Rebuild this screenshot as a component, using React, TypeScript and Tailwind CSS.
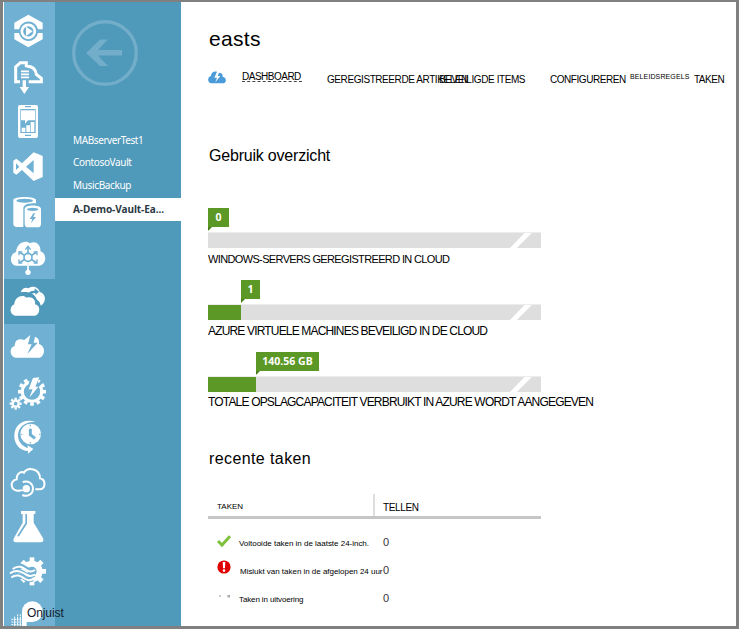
import type { ReactNode } from "react";

const BLUE = "#70b1d3";
const W = "#ffffff";

type RailItem = { top: number; art: ReactNode; active?: boolean };

const gearTeeth = (cx: number, cy: number, r: number, n: number, w: number, h: number) =>
  Array.from({ length: n }, (_, i) => (
    <rect key={i} x={cx - w / 2} y={cy - r} width={w} height={h} fill={W} transform={`rotate(${(i * 360) / n} ${cx} ${cy})`} />
  ));

const railItems: RailItem[] = [
  {
    top: 27,
    art: (
      <>
        <path d="M43 88V68L85 44L128 68V88H114A29 29 0 0 0 57 88Z M43 99H57A29 29 0 0 0 114 99H128V118L85 142L43 118Z" fill={W} />
        <circle cx="85" cy="94" r="19.5" fill="none" stroke={W} strokeWidth="8" />
        <path d="M78 80L98 94L78 108Z" fill={W} />
      </>
    ),
  },
  {
    top: 162,
    art: (
      <>
        <path d="M60 245H47V201L61 188H79V202M86 245H124V235L109 223Q105 199 81 199" fill="none" stroke={W} strokeWidth="9" />
        <path d="M63 214H87M63 223H87M63 232H87" stroke={W} strokeWidth="5" />
        <path d="M68 241H78V261H87L73 282L59 261H68Z" fill={W} />
      </>
    ),
  },
  {
    top: 297,
    art: (
      <>
        <rect x="54" y="315" width="60" height="99" rx="6" fill={W} />
        <path d="M61 327H107V399H61Z" fill={BLUE} />
        <path d="M63 331H105V361H84L75 371V361H63ZM65 383H76V396H65ZM79 376H90V396H79ZM92 366H103V396H92Z" fill={W} />
        <path d="M75 320H93M75 406H93" stroke={BLUE} strokeWidth="4" />
      </>
    ),
  },
  {
    top: 12,
    art: (
      <path d="M101 37L128 48V111L101 123L66 90L49 104L40 98V62L49 56L66 70ZM101 60L78 80L101 100ZM48 70V90L58 80Z" fill={W} fillRule="evenodd" />
    ),
  },
  {
    top: 147,
    art: (
      <>
        <path d="M40 180C40 168 108 168 108 180V190C84 190 70 194 70 205V261H54Q40 261 40 251Z" fill={W} />
        <ellipse cx="74" cy="182" rx="25" ry="6" fill={BLUE} />
        <path d="M74 207C74 193 123 193 123 207V251Q123 262 112 262H85Q74 262 74 251Z" fill={W} />
        <ellipse cx="98" cy="208" rx="17" ry="5" fill={BLUE} />
        <path d="M101 219L89 237H97L93 250L108 231H100L105 219Z" fill={BLUE} />
      </>
    ),
  },
  {
    top: 282,
    art: (
      <>
        <path d="M50 377C28 376 27 342 48 336C50 310 75 298 90 310C107 300 124 316 121 334C143 340 139 377 116 377Z" fill={W} />
        <path d="M84 321V387M84 352L58 337M84 352L110 337M84 352L58 368M84 352L110 368" stroke={BLUE} strokeWidth="5" />
        <path d="M76 329L84 319L92 329M57 346V336H67M101 336H111V346M57 358V369H67M101 369H111V358" fill="none" stroke={BLUE} strokeWidth="4" />
        <circle cx="84" cy="352" r="12" fill={W} stroke={BLUE} strokeWidth="5" />
        <path d="M84 366V394" stroke={W} strokeWidth="5" />
        <circle cx="84" cy="397" r="8" fill={W} />
      </>
    ),
  },
  {
    top: 12,
    active: true,
    art: (
      <>
        <path d="M62 52C66 39 78 36 86 40C100 30 116 38 119 51C138 55 141 82 122 92C120 79 113 77 110 73C104 54 84 48 62 52Z" fill={W} />
        <path d="M84 56Q90 46 104 47V40L117 50L106 60V54Q96 53 91 60Z" fill="#4f99ba" />
        <path d="M46 122C28 120 27 94 43 88C43 66 68 56 80 68C95 62 109 75 105 88C124 91 120 120 105 122Z" fill={W} />
      </>
    ),
  },
  {
    top: 147,
    art: (
      <path d="M47 248C27 245 28 216 44 213C45 193 57 189 73 195L91 180L84 208H95L82 237L113 203H101L105 185C114 188 119 196 117 207C139 213 135 246 118 248Z" fill={W} />
    ),
  },
  {
    top: -63,
    art: (
      <>
        <circle cx="96" cy="5" r="29" fill="none" stroke={W} strokeWidth="9" />
        {gearTeeth(96, 5, 42, 12, 11, 10)}
        <path d="M93 -50H122L113 -22H128L84 26L94 -4H83Z" fill={BLUE} />
        <path d="M99 -36L118 -38L106 -10H115L88 23L98 -2H86Z" fill={W} />
        <circle cx="47" cy="41" r="9" fill="none" stroke={W} strokeWidth="7" />
        {gearTeeth(47, 41, 18, 8, 7, 7)}
      </>
    ),
  },
  {
    top: 72,
    art: (
      <>
        <path d="M107 95C65 84 43 108 43 138C43 165 61 182 84 183V191L100 177L83 166V174C66 168 53 153 54 134C55 112 75 94 107 95Z" fill={W} />
        <circle cx="92" cy="132" r="31" fill={W} />
        <path d="M91 116V134L105 145" fill="none" stroke={BLUE} strokeWidth="9" />
        <path d="M91 104V109M117 133H122M91 156V161M62 133H67" stroke={BLUE} strokeWidth="3" />
      </>
    ),
  },
  {
    top: 207,
    art: (
      <>
        <path d="M61 302C30 306 27 272 50 268C50 246 67 244 72 248C84 230 119 235 120 265C139 269 137 298 119 298H106" fill="none" stroke={W} strokeWidth="6" />
        <path d="M68 276C85 270 99 281 99 296C99 312 83 322 67 315" fill="none" stroke={W} strokeWidth="6" />
        <circle cx="79" cy="296" r="11" fill={W} />
        <path d="M59 301H80" stroke={W} strokeWidth="5" />
      </>
    ),
  },
  {
    top: -3,
    art: (
      <>
        <path d="M63 18H106V27H101V53L129 99Q134 112 121 112H49Q36 112 42 99L68 53V27H63Z" fill={W} />
        <path d="M76 27H81V56L57 94H51L76 54Z" fill={BLUE} />
      </>
    ),
  },
  {
    top: 132,
    art: (
      <>
        <circle cx="96" cy="199" r="23" fill="none" stroke={W} strokeWidth="18" />
        {gearTeeth(96, 199, 42, 8, 14, 14)}
        <path d="M30 190C55 170 70 185 83 193Q92 198 103 194M30 205C52 187 68 202 80 210Q91 216 103 210M35 219C54 204 65 214 77 222Q87 228 99 223" fill="none" stroke={BLUE} strokeWidth="12" />
        <path d="M38 192C56 178 69 188 81 196Q92 203 105 195M30 205C52 191 68 202 80 210Q91 216 105 209M34 217C52 205 63 214 76 222Q87 229 100 222" fill="none" stroke={W} strokeWidth="6" />
      </>
    ),
  },
  {
    top: 267,
    art: (
      <>
        <circle cx="97" cy="320" r="31" fill={W} />
        <path d="M66 320H97V351H80V363H66Z" fill={W} />
        <path d="M34 343H64M34 351H64M34 359H64M44 335V363M53 328V363M61 328V363" stroke={W} strokeWidth="3" strokeDasharray="6 2" />
      </>
    ),
  },
];

function Rail() {
  return (
    <nav className="flex w-[51px] shrink-0 flex-col bg-[#70b1d3] pt-[7px]">
      {railItems.map((item, i) => (
        <div key={i} className={item.active ? "h-[45px] w-[51px] shrink-0 bg-[#4f99ba]" : "h-[45px] w-[51px] shrink-0"}>
          <svg className="block h-[45px] w-[51px]" viewBox={`12 ${item.top} 153 135`}>
            {item.art}
          </svg>
        </div>
      ))}
      <span className="absolute left-[24px] top-[604px] whitespace-nowrap text-[12px] leading-[14px] tracking-[-0.1px] text-[#14202a]">Onjuist</span>
    </nav>
  );
}

function VaultList() {
  return (
    <aside className="flex w-[126px] shrink-0 flex-col bg-[#4f99ba] font-['Noto_Sans','Open_Sans',sans-serif] text-[10px] text-white">
      <svg className="ml-[16px] mt-[17px] block h-[68px] w-[68px] shrink-0" viewBox="0 0 68 68">
        <circle cx="34" cy="34" r="31.3" fill="none" stroke="#72adc9" strokeWidth="3.4" />
        <path d="M15 34L29 20.5H37L27 31H51V36.5H27L37 47H29Z" fill="#72adc9" />
      </svg>
      <ul className="mt-[42px] whitespace-nowrap">
        <li className="h-[22px] pl-[18px] leading-[22px] tracking-[-0.4px]">MABserverTest1</li>
        <li className="h-[23px] pl-[18px] leading-[23px] tracking-[-0.35px]">ContosoVault</li>
        <li className="h-[24px] pl-[18px] leading-[22px] tracking-[-0.35px]">MusicBackup</li>
        <li className="h-[23px] bg-white pl-[18px] font-bold leading-[23px] tracking-[-0.05px] text-[#2b3944]">A-Demo-Vault-Ea...</li>
      </ul>
    </aside>
  );
}

function Tabs() {
  return (
    <div className="mt-[18px] flex h-[24px] items-start whitespace-nowrap text-[10px] leading-[12px]">
      <svg className="mt-[2px] block h-[13px] w-[18px]" viewBox="0 0 54 39">
        <path d="M10 37C-3 35 -2 17 9 15C9 5 17 -1 27 2L19 20H27L22 34L37 15H29L33 5C42 5 45 10 44 17C57 19 56 36 46 37Z" fill="#4a9bd8" />
      </svg>
      <span className="ml-[16px] mt-[2px] h-[11px] w-[60px] border-b border-dashed border-[#444] tracking-[-0.5px]">DASHBOARD</span>
      <span className="ml-[25px] mt-[5px] w-[112px] tracking-[-0.42px]">GEREGISTREERDE ARTIKELEN</span>
      <span className="mt-[5px] w-[111px] tracking-[-0.42px]">BEVEILIGDE ITEMS</span>
      <span className="mt-[5px] w-[80px] tracking-[-0.45px]">CONFIGUREREN</span>
      <span className="mt-[2px] w-[64px] text-[7px] tracking-[0.12px]">BELEIDSREGELS</span>
      <span className="mt-[5px] tracking-[-0.5px]">TAKEN</span>
    </div>
  );
}

type MeterProps = { value: string; offset: string; fill: string; tag: string; label: string; labelStyle: string };

function Meter({ value, offset, fill, tag, label, labelStyle }: MeterProps) {
  return (
    <div className="h-[72px]">
      <div className={`${offset} ${tag} flex h-[19px] items-center justify-center bg-[#5c9825] font-['Noto_Sans',sans-serif] text-[10.5px] font-bold text-white`}>
        {value}
      </div>
      <svg className={`${offset} block h-[5px] w-[5px]`} viewBox="0 0 5 5">
        <path d="M0 0H4L0 4Z" fill="#47801a" />
      </svg>
      <div className="flex h-[16px] w-[333px] border-t border-[#ececec] bg-[#dedede]">
        <div className={`${fill} h-[15px] bg-[#5c9825]`} />
        <svg className="ml-auto block h-[15px] w-[32px]" viewBox="0 0 32 15">
          <path d="M1 15L15.5 0H22.8L7.8 15Z" fill="#fff" />
        </svg>
      </div>
      <p className={`${labelStyle} whitespace-nowrap leading-[14px]`}>{label}</p>
    </div>
  );
}

function TaskTable() {
  return (
    <div className="mt-[24px] w-[333px] text-[8px]">
      <div className="flex h-[26px] border-b-[3px] border-[#c6c6c6]">
        <span className="w-[165px] pl-[9px] pt-[8px] leading-[12px]">TAKEN</span>
        <span className="mt-[1px] w-[2px] bg-[#dedede]" />
        <span className="pl-[8px] pt-[9px] text-[10px] leading-[12px] tracking-[-0.35px]">TELLEN</span>
      </div>
      <div className="mt-[8px] flex h-[28px] items-center whitespace-nowrap">
        <svg className="ml-[9px] block h-[14px] w-[14px]" viewBox="0 0 14 14">
          <path d="M1 7L5 11L13 2.2" fill="none" stroke="#7ec13d" strokeWidth="3" />
        </svg>
        <span className="ml-[8px] mt-[5px] w-[144px] tracking-[-0.02px]">Voltooide taken in de laatste 24-inch.</span>
        <span className="mt-[2px] text-[11px] text-[#333]">0</span>
      </div>
      <div className="flex h-[28px] items-center whitespace-nowrap">
        <svg className="mb-[5px] ml-[9px] block h-[14px] w-[14px]" viewBox="0 0 14 14">
          <circle cx="7" cy="7" r="6.6" fill="#df0000" />
          <path d="M5.7 2H8.3L7.9 8.2H6.1Z" fill="#fff" />
          <circle cx="7" cy="10.6" r="1.3" fill="#fff" />
        </svg>
        <span className="ml-[9px] mt-[5px] w-[143px] tracking-[-0.03px]">Mislukt van taken in de afgelopen 24 uur</span>
        <span className="mt-[2px] text-[11px] text-[#333]">0</span>
      </div>
      <div className="flex h-[28px] items-center whitespace-nowrap">
        <svg className="mb-[3px] ml-[9px] block h-[14px] w-[14px]" viewBox="0 0 14 14">
          <path d="M2 6h2v2H2Z" fill="#ccc" />
          <path d="M10.5 6h2.5v2.5h-2.5Z" fill="#aaa" />
        </svg>
        <span className="ml-[8px] mt-[5px] w-[144px] tracking-[-0.12px]">Taken in uitvoering</span>
        <span className="mt-[2px] text-[11px] text-[#333]">0</span>
      </div>
    </div>
  );
}

export default function App() {
  return (
    <div className="relative flex h-[629px] w-[739px] overflow-hidden border-b-[3px] border-l-[3px] border-r-[3px] border-t-2 border-[#808080] bg-white pl-px font-['Liberation_Sans',Arial,sans-serif] text-black">
      <Rail />
      <VaultList />
      <main className="min-w-0 flex-1 pl-[27px] pt-[25px]">
        <h1 className="h-[24px] pl-px text-[21px] leading-[24px] tracking-[0.3px]">easts</h1>
        <Tabs />
        <h2 className="mt-[53px] h-[20px] whitespace-nowrap pl-px text-[16px] leading-[20px] tracking-[-0.2px]">Gebruik overzicht</h2>
        <section className="mt-[42px]">
          <Meter value="0" offset="ml-0" fill="w-0" tag="w-[21px]" label="WINDOWS-SERVERS GEREGISTREERD IN CLOUD" labelStyle="mt-[4px] text-[11px] tracking-[-0.64px]" />
          <Meter value="1" offset="ml-[33px]" fill="w-[33px]" tag="w-[19px]" label="AZURE VIRTUELE MACHINES BEVEILIGD IN DE CLOUD" labelStyle="mt-[4px] text-[12px] tracking-[-0.83px]" />
          <Meter value="140.56 GB" offset="ml-[48px]" fill="w-[48px]" tag="w-[63px]" label="TOTALE OPSLAGCAPACITEIT VERBRUIKT IN AZURE WORDT AANGEGEVEN" labelStyle="mt-[3px] text-[12px] tracking-[-0.82px]" />
        </section>
        <h2 className="mt-[25px] h-[20px] pl-px text-[16px] leading-[20px] tracking-[0.4px]">recente taken</h2>
        <TaskTable />
      </main>
    </div>
  );
}
